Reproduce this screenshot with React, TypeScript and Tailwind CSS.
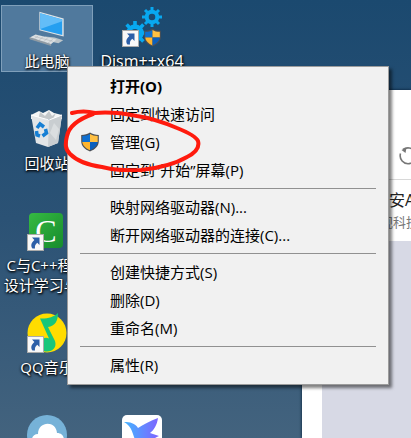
import React from "react";
import { clsx } from "clsx";

const labelShadow = "[text-shadow:1px_1px_2px_#000,0_1px_3px_#000]";

const ShieldIcon = ({ className }: { className?: string }) => (
    <svg viewBox="0 0 20 20" className={className}>
        <path d="M10 .6C7.600 2.200 4.900 2.900 1.200 2.900V9c0 5 3.400 8.300 8.800 10.500C15.400 17.300 18.800 14 18.800 9V2.900C15.100 2.900 12.400 2.200 10 .6z" fill="#4c4f54" />
        <path d="M10 2v8H2.300V4C5.500 3.900 7.900 3.300 10 2z" fill="#0f6fd0" />
        <path d="M10 2v8h7.700V4C14.500 3.900 12.100 3.300 10 2z" fill="#ffc043" />
        <path d="M2.300 10H10v8.300C5.700 16.500 2.700 13.700 2.300 10z" fill="#ffb52e" />
        <path d="M17.700 10H10v8.300c4.300-1.800 7.300-4.600 7.700-8.300z" fill="#0b5fbd" />
    </svg>
);

const ShortcutArrow = () => (
    <svg viewBox="0 0 17 17" className="absolute bottom-0 left-0 size-[17px]">
        <rect x=".5" y=".5" width="16" height="16" fill="#f8f8f8" stroke="#aaa" />
        <path d="M5 3.500H12.500V11L10.300 8.800C8.300 10.500 7.600 12 8 14.500H5.500C3.200 11.500 4.500 8.500 7.400 6z" fill="#2c5fa8" />
    </svg>
);

const ComputerIcon = () => (
    <svg viewBox="-1 -4 42 42" className="size-10">
        <path d="M18 27l10 1 9 3-5 3-14-3z" fill="#bcc5ca" />
        <path d="M12 1l25.500 7v19L12 20.500z" fill="#dfe4e7" />
        <path d="M13 2.500l23 6.500v16.500L13 19.500z" fill="#259ff0" />
        <path d="M13 2.500l23 6.500v2L13 19z" fill="#63bdf8" />
        <path d="M8 25l22 5-6 5L2 28z" fill="#dce0e2" />
        <path d="M2 28l22 7v1.500L2 29.500zM7 27l19 5M11 26l-5 4M16 27l-5 4.500M21 28l-5 5M26 30l-5 4" fill="#8d969c" stroke="#a3abb0" strokeWidth=".5" />
    </svg>
);

const Gear = ({ x, y, r }: { x: number; y: number; r: number }) => (
    <g transform={`translate(${x} ${y}) scale(${r / 10})`} stroke="#08a8f0">
        <circle r="5.300" fill="none" strokeWidth="4" />
        <path d="M0-10v4M0 10V6M-10 0h4M10 0H6M-7-7l3 3M7 7L4 4M-7 7l3-3M7-7L4-4" strokeWidth="3" />
    </g>
);

const DismIcon = () => (
    <div className="relative size-10">
        <svg viewBox="0 0 40 40" className="size-10">
            <Gear x={30} y={10} r={10} />
            <Gear x={13} y={26} r={12} />
        </svg>
        <ShieldIcon className="absolute right-0 bottom-0 size-[19px]" />
        <ShortcutArrow />
    </div>
);

const RecycleBinIcon = () => (
    <svg viewBox="0 0 40 40" className="size-10">
        <path d="M4 6l8-4 4 2 6-3 5 3 8 2v4H4z" fill="#f4f5f5" />
        <path d="M13 3l5 4 4-5 3 5 4-3-3 6-15 1z" fill="#c4c8ca" />
        <path d="M4 6l18 5 13-5-4 28-10 4-12-4z" fill="#e2e5e7" />
        <path d="M22 11l13-5-4 28-10 4z" fill="#c9ced1" />
        <path d="M27 14l5 6-3 11-6-7z" fill="#dadee0" />
        <path d="M4 6l18 5 13-5" fill="none" stroke="#fff" />
        <g fill="none" stroke="#167fd4" strokeWidth="3.500">
            <path d="M10 19l3-4 4 3M18.500 20l1 4-4 3M13 27l-3-1-.5-4" />
        </g>
    </svg>
);

const CIcon = () => (
    <div className="relative size-10">
        <div className="absolute top-0.5 right-1 flex h-[35px] w-[34px] items-center justify-center rounded bg-linear-to-br from-[#35ba43] to-[#168c2c] font-['Liberation_Serif',serif] text-[32px] text-white [text-shadow:none]">
            C
        </div>
        <ShortcutArrow />
    </div>
);

const QQMusicIcon = () => (
    <div className="relative size-10">
        <svg viewBox="0 0 40 40" className="size-10">
            <circle cx="20" cy="20" r="19.500" fill="#ffdc00" />
            <path d="M13 5.500C20 6 27 4 31 0c0 8-3 13-10 14l7 14c2 6-2 10.500-8 10.500-9 0-10-11-4-13 2-1 4-1 6 0L13 5.500z" fill="#18c67a" />
        </svg>
        <ShortcutArrow />
    </div>
);

const CloudIcon = () => (
    <svg viewBox="0 0 40 40" className="size-10">
        <circle cx="20" cy="20" r="20" fill="#76b2d8" />
        <path d="M10 31c-7-1-7-12 1-12 0-13 18-14 19-1 9 0 9 12 1 13z" fill="#fff" />
    </svg>
);

const BirdIcon = () => (
    <svg viewBox="0 0 40 40" className="size-10">
        <defs>
            <linearGradient id="bird">
                <stop offset="0" stopColor="#44b4ff" />
                <stop offset="1" stopColor="#7e63ff" />
            </linearGradient>
        </defs>
        <rect width="40" height="40" rx="5" fill="#fff" />
        <path d="M2 7c6 0 11 1 14 6C22 9 28 6 36 3c-1 7-4 12-8 15l9 3c-6 2-7 6-10 9-4 4-9 5-16 5 3-4 3-8 1-13C10 16 9 11 2 7z" fill="url(#bird)" />
    </svg>
);

type ShortcutProps = {
    label: string;
    icon: React.ReactNode;
    selected?: boolean;
    large?: boolean;
};

const Shortcut: React.FC<ShortcutProps> = ({ label, icon, selected, large }) => (
    <button
        type="button"
        className={clsx(
            "mr-0.5 ml-px flex flex-col items-center gap-1 self-start border pt-px leading-5 text-white",
            labelShadow,
            large ? "text-base/5" : "text-[15px]/5",
            selected ? "border-[#7f9fba] bg-[#50799d]" : "border-transparent"
        )}>
        {icon}
        <span className="whitespace-pre">{label}</span>
    </button>
);

const menu = [
    [
        { label: "打开(O)", bold: true },
        { label: "固定到快速访问" },
        { label: "管理(G)", shield: true },
        { label: "固定到“开始”屏幕(P)" },
    ],
    [{ label: "映射网络驱动器(N)..." }, { label: "断开网络驱动器的连接(C)..." }],
    [{ label: "创建快捷方式(S)" }, { label: "删除(D)" }, { label: "重命名(M)" }],
    [{ label: "属性(R)" }],
] as { label: string; bold?: boolean; shield?: boolean }[][];

const ContextMenu = () => (
    <div
        role="menu"
        className="absolute top-[66px] left-[67px] w-[322px] border border-[#9c9c9c] bg-[#f1f1f1] py-[5px] text-[15px] text-black shadow-[3px_3px_3px_rgba(0,0,0,0.5)]">
        {menu.map((group, i) => (
            <div key={i}>
                {i > 0 && <hr className="mx-3 my-1 border-[#919191]" />}
                {group.map((item) => (
                    <button
                        key={item.label}
                        type="button"
                        role="menuitem"
                        className={clsx("flex h-7 w-full items-center px-3", item.bold && "font-bold")}>
                        <span className="w-[30px]">{item.shield && <ShieldIcon className="size-5" />}</span>
                        {item.label}
                    </button>
                ))}
            </div>
        ))}
    </div>
);

const BrowserWindow = () => (
    <div className="absolute top-[90px] right-0 bottom-0 left-[302px] flex flex-col overflow-hidden bg-white shadow-[0_0_3px_#001830]">
        <div className="flex h-[90px] items-center border-b border-[#d8d8d8] pt-[42px] pl-24">
            <svg viewBox="0 0 20 20" className="size-5 shrink-0" fill="none" stroke="#777" strokeWidth="1.600">
                <path d="M2.500 7.500A8 8 0 1 0 17 5.500 8.500 8.500 0 0 0 5 3.500" />
                <path d="M8.500 1.500L3.500 4l4 3z" fill="#777" stroke="none" />
            </svg>
        </div>
        <div className="pt-2 pl-[87px] text-base leading-6 whitespace-nowrap text-[#222]">安A</div>
        <div className="h-[29px] pl-[78px] text-[13px] leading-5 whitespace-nowrap text-[#777]">视科技</div>
        <div className="ml-5 grow bg-[#d7d9e5]" />
    </div>
);

export default function App() {
    return (
        <div className="relative min-h-screen overflow-hidden bg-linear-to-b from-[#1b496f] via-[#2b5275] to-[#43637e] font-['Open_Sans','Noto_Sans_CJK_SC',sans-serif]">
            <div className="absolute inset-0 grid auto-rows-[102px] grid-cols-[95px_95px] overflow-hidden pt-[5px]">
                <Shortcut label="此电脑" icon={<ComputerIcon />} selected />
                <Shortcut label="Dism++x64" icon={<DismIcon />} large />
                <Shortcut label="回收站" icon={<RecycleBinIcon />} />
                <span />
                <Shortcut label={"C与C++程序\n设计学习与…"} icon={<CIcon />} />
                <span />
                <Shortcut label="QQ音乐" icon={<QQMusicIcon />} />
                <span />
                <Shortcut label="" icon={<CloudIcon />} />
                <Shortcut label="" icon={<BirdIcon />} />
            </div>
            <BrowserWindow />
            <ContextMenu />
            <svg
                viewBox="0 0 140 64"
                className="pointer-events-none absolute top-[108px] left-[62px] h-16 w-[140px]"
                fill="none"
                stroke="#ff1b0e"
                strokeWidth="4"
                strokeLinecap="round"
                strokeLinejoin="round">
                <path d="M10 5C18 3 25 3 33 5c12-1 27 0 42 3 13 2 26 6 40 12 10 4 19 8 21 13 2 7-3 12-11 16-12 7-28 11-46 13-15 1-27 0-39-3-15-2-25-6-32-13-5-5-5-10-3-18C7 18 17 11 31 6" />
            </svg>
        </div>
    );
}
